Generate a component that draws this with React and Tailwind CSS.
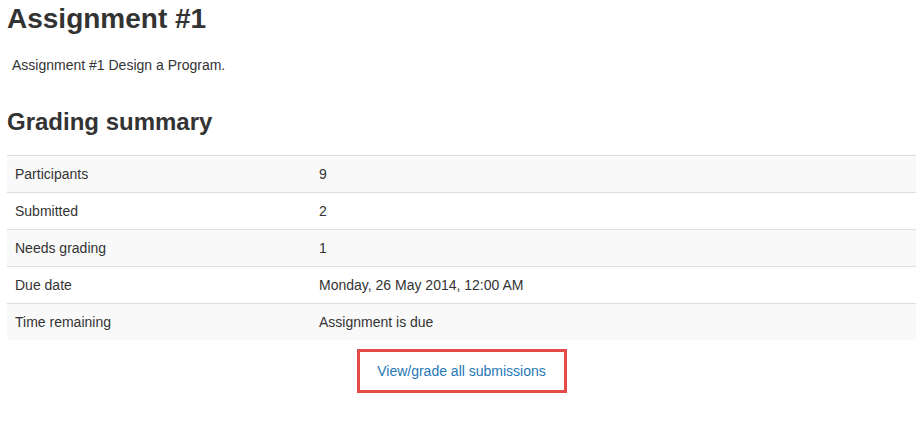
import React from "react";

const rows = [
  ["Participants", "9"],
  ["Submitted", "2"],
  ["Needs grading", "1"],
  ["Due date", "Monday, 26 May 2014, 12:00 AM"],
  ["Time remaining", "Assignment is due"],
];

export default function App() {
  return (
    <div className="min-h-[443px] bg-white pl-[7px] pr-[6px] pt-[1px] text-[14px] text-[#333] font-['Liberation_Sans',Arial,sans-serif]">
      <h2 className="text-[28px] font-bold leading-[36px] m-0">Assignment #1</h2>
      <div className="mt-[18px] pl-[5px] leading-[20px]">Assignment #1 Design a Program.</div>

      <h3 className="mt-[32px] text-[24px] font-bold leading-[30px]">Grading summary</h3>

      <table className="mt-[18px] w-full border-collapse">
        <tbody>
          {rows.map(([label, value], i) => (
            <tr key={label} className={i % 2 === 0 ? "bg-[#f9f9f9]" : "bg-white"}>
              <td className="w-[304px] border-t border-[#ddd] px-[8px] py-[8px] leading-[20px] align-top">
                {label}
              </td>
              <td className="border-t border-[#ddd] px-[8px] py-[8px] leading-[20px] align-top">
                {value}
              </td>
            </tr>
          ))}
        </tbody>
      </table>

      <div className="mt-[9px] flex justify-center">
        <div className="flex h-[44px] w-[210px] items-center justify-center border-[3px] border-[#e64c47]">
          <a href="#" className="text-[14px] text-[#1f78b4] no-underline">
            View/grade all submissions
          </a>
        </div>
      </div>
    </div>
  );
}
